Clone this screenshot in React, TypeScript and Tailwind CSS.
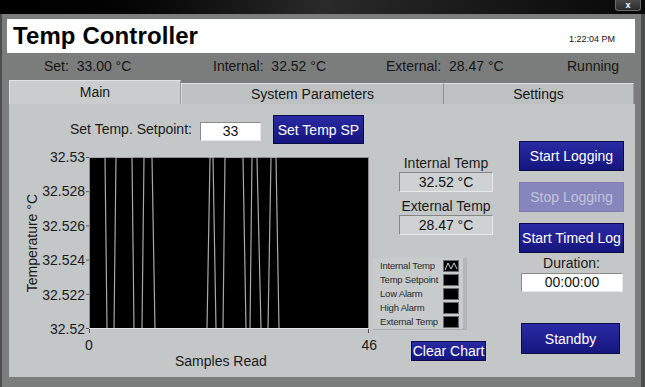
import React from 'react'

// [x in page px, 1 = high (32.53), 0 = low (32.52)]
const samples: [number, 0 | 1][] = [
  [89, 1], [105, 1], [107, 0], [114, 0], [116, 1], [132, 1], [134, 0], [142, 0], [144, 1],
  [152, 1], [155, 0], [207, 0], [210, 1], [213, 1], [216, 0], [223, 0], [225, 1], [243, 1],
  [246, 0], [250, 0], [252, 1], [257, 1], [261, 0], [268, 0], [271, 1], [276, 1], [279, 0],
  [369, 0],
]

const yTicks = ['32.53', '32.528', '32.526', '32.524', '32.522', '32.52']
const legendRows = ['Internal Temp', 'Temp Setpoint', 'Low Alarm', 'High Alarm', 'External Temp']

function NavyButton({
  children,
  className = '',
  disabled = false,
}: {
  children: React.ReactNode
  className?: string
  disabled?: boolean
}) {
  const look = disabled
    ? 'border-[#7c7cae] bg-[#8686bd] text-[#c3c3dc]'
    : 'border-[#0b0b46] bg-gradient-to-b from-[#2a2aa4] to-[#15157e] text-white'
  return (
    <button
      type="button"
      className={`flex items-center justify-center whitespace-nowrap border text-[14px] leading-none ${look} ${className}`}
    >
      {children}
    </button>
  )
}

function Readout({ label, value }: { label: string; value: string }) {
  return (
    <div className="flex flex-col items-center">
      <div className="text-[14px] leading-[18px] text-[#1a1a1a]">{label}</div>
      <div className="flex h-[20px] w-full items-center justify-center border border-b-[#e8eaea] border-l-[#858787] border-r-[#e8eaea] border-t-[#858787] bg-[#cfd2d2] text-[14px] text-[#111]">
        {value}
      </div>
    </div>
  )
}

function Chart() {
  const points = samples.map(([x, hi]) => `${x - 85},${hi ? 0.5 : 171.5}`).join(' ')
  return (
    <div className="flex flex-col">
      <div className="flex items-start">
        <div className="ml-[14px] mt-[8px] flex h-[172px] w-[18px] items-center justify-center">
          <span className="rotate-180 whitespace-nowrap text-[14px] text-[#1a1a1a] [writing-mode:vertical-rl]">
            Temperature °C
          </span>
        </div>
        <div className="flex h-[188px] w-[44px] flex-col justify-between text-right">
          {yTicks.map((t) => (
            <div key={t} className="h-[16px] text-[14px] leading-[16px] text-[#1a1a1a]">
              {t}
            </div>
          ))}
        </div>
        <svg width="286" height="176" className="mt-[8px]">
          <rect x="4.5" y="0.5" width="279" height="171" fill="#000" stroke="#8c8c8c" />
          {yTicks.map((t, i) => (
            <line key={t} x1="1" x2="4" y1={0.5 + i * 34.2} y2={0.5 + i * 34.2} stroke="#555" />
          ))}
          <line x1="4.5" x2="4.5" y1="172" y2="176" stroke="#555" />
          <line x1="283.5" x2="283.5" y1="172" y2="176" stroke="#555" />
          <polyline points={points} fill="none" stroke="#a9a9a9" strokeWidth="1.2" />
          <line x1="4" x2="284" y1="171.5" y2="171.5" stroke="#e2e2e2" />
        </svg>
      </div>
      <div className="ml-[76px] flex w-[292px] justify-between text-[14px] leading-[16px] text-[#1a1a1a]">
        <span>0</span>
        <span>46</span>
      </div>
      <div className="ml-[166px] text-[14px] leading-[16px] text-[#1a1a1a]">Samples Read</div>
    </div>
  )
}

function Legend() {
  return (
    <div className="flex h-[72px] w-[94px] flex-col justify-center border-b border-r-[4px] border-b-[#a9acac] border-r-[#b3b6b6] bg-[#c8cbcb] pl-[7px] pr-[4px]">
      {legendRows.map((r, i) => (
        <div key={r} className="flex h-[14px] items-center justify-between">
          <span className="text-[9.5px] leading-none tracking-[-0.2px] text-[#2a2a2a]">{r}</span>
          <span className="flex h-[12px] w-[16px] items-center justify-center border border-[#6a6a6a] bg-black">
            {i === 0 ? (
              <svg width="14" height="10">
                <polyline points="1,9 4,2 7,8 10,2 13,8" fill="none" stroke="#d0d0d0" strokeWidth="1" />
              </svg>
            ) : null}
          </span>
        </div>
      ))}
    </div>
  )
}

export default function App() {
  return (
    <div className="flex h-[387px] w-[645px] flex-col overflow-hidden bg-[#4c4e4e] font-['Liberation_Sans',Arial,sans-serif]">
      <div className="relative h-[14px] shrink-0 bg-gradient-to-r from-black via-[#2a2a2a] to-[#080808]">
        <div className="absolute right-[4px] top-0 flex h-[11px] w-[26px] items-center justify-center rounded-b-[3px] border border-t-0 border-[#6a6a6a] bg-gradient-to-b from-[#4a4a4a] to-[#2c2c2c] text-[9px] font-bold leading-none text-white">
          x
        </div>
      </div>

      <div className="ml-[2px] flex h-[373px] w-[639px] flex-col bg-[#7b7d7d] pl-[5px] pr-[6px] pt-[5px]">
        <div className="flex h-[34px] items-center justify-between bg-white pl-[6px] pr-[20px]">
          <span className="text-[24px] font-bold leading-none tracking-[0.1px] text-black">Temp Controller</span>
          <span className="mt-[7px] text-[9px] text-[#111]">1:22:04 PM</span>
        </div>

        <div className="flex h-[27px] items-center whitespace-pre pl-[37px] text-[14px] text-[#161616]">
          <span className="w-[169px]">Set:  33.00 °C</span>
          <span className="w-[173px]">Internal:  32.52 °C</span>
          <span className="w-[181px]">External:  28.47 °C</span>
          <span>Running</span>
        </div>

        <div className="ml-[2px] flex h-[24px] items-end text-[14px] text-[#161616]">
          <div className="flex h-[24px] w-[172px] items-center justify-center border-l border-r border-t border-l-[#e2e4e4] border-r-[#9a9d9d] border-t-[#e2e4e4] bg-[#cacdcd]">
            Main
          </div>
          <div className="flex h-[21px] w-[262px] items-center justify-center border-l border-t border-l-[#dadcdc] border-t-[#dfe1e1] bg-[#bec1c1]">
            System Parameters
          </div>
          <div className="flex h-[21px] w-[191px] items-center justify-center border-l border-r border-t border-l-[#8d9090] border-r-[#9a9d9d] border-t-[#dfe1e1] bg-[#bec1c1]">
            Settings
          </div>
        </div>

        <div className="ml-[2px] flex h-[273px] w-[626px] bg-[#c4c7c7]">
          <div className="flex w-[364px] flex-col pt-[11px]">
            <div className="ml-[61px] flex h-[29px] items-center">
              <span className="text-[14px] text-[#1a1a1a]">Set Temp. Setpoint:</span>
              <div className="ml-[8px] mt-[4px] flex h-[19px] w-[61px] items-center justify-center border border-b-[#e8e8e8] border-l-[#8a8c8c] border-r-[#e8e8e8] border-t-[#8a8c8c] bg-white text-[14px] text-[#111]">
                33
              </div>
              <NavyButton className="ml-[12px] h-[29px] w-[91px]">Set Temp SP</NavyButton>
            </div>
            <div className="mt-[5px]">
              <Chart />
            </div>
          </div>

          <div className="flex w-[120px] flex-col pt-[50px]">
            <div className="ml-[26px] flex w-[94px] flex-col gap-[5px]">
              <Readout label="Internal Temp" value="32.52 °C" />
              <Readout label="External Temp" value="28.47 °C" />
            </div>
            <div className="mt-[23px]">
              <Legend />
            </div>
            <NavyButton className="ml-[38px] mt-[11px] h-[20px] w-[75px]">Clear Chart</NavyButton>
          </div>

          <div className="ml-[26px] flex w-[105px] flex-col pt-[37px]">
            <NavyButton className="h-[30px] w-full">Start Logging</NavyButton>
            <NavyButton disabled className="mt-[11px] h-[30px] w-full">
              Stop Logging
            </NavyButton>
            <NavyButton className="mt-[11px] h-[30px] w-full">Start Timed Log</NavyButton>
            <div className="mt-[1px] text-center text-[14px] leading-[18px] text-[#1a1a1a]">Duration:</div>
            <div className="ml-[2px] mt-[1px] flex h-[19px] w-[102px] items-center justify-center border border-b-[#e8e8e8] border-l-[#8a8c8c] border-r-[#e8e8e8] border-t-[#8a8c8c] bg-white text-[14px] text-[#111]">
              00:00:00
            </div>
            <NavyButton className="ml-[2px] mt-[31px] h-[31px] w-[99px]">Standby</NavyButton>
          </div>
        </div>
      </div>
    </div>
  )
}
